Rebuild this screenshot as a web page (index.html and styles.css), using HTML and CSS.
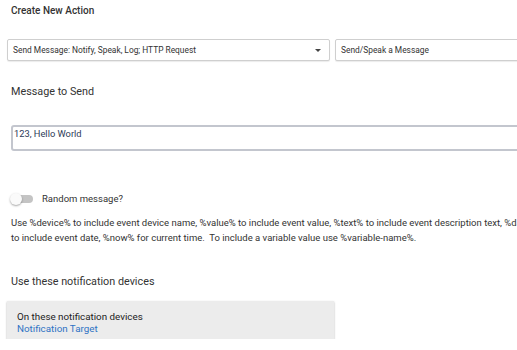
FILE: index.html
```html
<!DOCTYPE html>
<html lang="en">
<head>
  <meta charset="UTF-8">
  <meta name="viewport" content="width=device-width, initial-scale=1.0">
  <link rel="stylesheet" href="styles.css">
  <title>Create New Action</title>
</head>
<body>
  <div class="page">
    <h2 class="title">Create New Action</h2>

    <div class="selects">
      <div class="select select-main">
        <span>Send Message: Notify, Speak, Log; HTTP Request</span>
        <span class="caret"></span>
      </div>
      <div class="select select-sub">
        <span>Send/Speak a Message</span>
      </div>
    </div>

    <h3 class="label">Message to Send</h3>
    <div class="textarea">123, Hello World</div>

    <div class="toggle-row">
      <span class="toggle"><span class="knob"></span></span>
      <span class="toggle-label">Random message?</span>
    </div>

    <p class="help">Use %device% to include event device name, %value% to include event value, %text% to include event description text, %date% to include event date, %now% for current time.&nbsp; To include a variable value use %variable-name%.</p>

    <h3 class="label label-devices">Use these notification devices</h3>
    <div class="device-box">
      <div class="device-title">On these notification devices</div>
      <div class="device-link">Notification Target</div>
    </div>
  </div>
</body>
</html>
```

FILE: styles.css
```css
body {
  margin: 0;
  background: #fff;
  font-family: Roboto, "Liberation Sans", sans-serif;
  color: #333;
  overflow: hidden;
}

.page {
  width: 560px;
  padding: 4px 0 0 7px;
}

.title {
  margin: 0 0 0 4px;
  font-size: 10px;
  font-weight: 500;
  line-height: 14px;
  color: #333;
}

.selects {
  display: flex;
  gap: 5px;
  margin-top: 21px;
}

.select {
  flex-shrink: 0;
  display: flex;
  align-items: center;
  height: 20px;
  padding: 0 5px;
  border: 1px solid #cfcfcf;
  border-radius: 2px;
  box-shadow: 0 1px 1px rgba(0, 0, 0, 0.08);
  font-size: 8.4px;
  color: #333;
  background: #fff;
}

.select-main {
  width: 311px;
  justify-content: space-between;
}

.select-sub {
  width: 320px;
}

.caret {
  width: 0;
  height: 0;
  margin-right: 3px;
  border-left: 3px solid transparent;
  border-right: 3px solid transparent;
  border-top: 3px solid #444;
}

.label {
  margin: 24px 0 0 4px;
  font-size: 10.8px;
  font-weight: 400;
  line-height: 14px;
  color: #333;
}

.textarea {
  margin: 26px 0 0 4px;
  height: 21px;
  padding: 0 1px 1px;
  border: 2px solid #c3c6ce;
  border-radius: 3px;
  font-size: 9.3px;
  line-height: 14px;
  color: #2c3a57;
}

.toggle-row {
  display: flex;
  align-items: center;
  gap: 9px;
  margin: 42px 0 0 4px;
}

.toggle {
  position: relative;
  width: 22px;
  height: 8px;
  border-radius: 4px;
  background: #c4c4c4;
}

.knob {
  position: absolute;
  left: -1px;
  top: -2px;
  width: 12px;
  height: 12px;
  border-radius: 50%;
  background: #fafafa;
  box-shadow: 0 1px 2px rgba(0, 0, 0, 0.35);
}

.toggle-label {
  font-size: 9.5px;
  color: #333;
}

.help {
  margin: 11px 0 0 4px;
  width: 532px;
  font-size: 9.5px;
  line-height: 15px;
  color: #333;
}

.label-devices {
  margin-top: 30px;
}

.device-box {
  width: 317px;
  margin-top: 12px;
  padding: 10px 0 4px 10px;
  background: #ececec;
  box-shadow: 0 1px 2px rgba(0, 0, 0, 0.3);
  font-size: 9.8px;
  line-height: 12px;
}

.device-title {
  color: #222;
}

.device-link {
  color: #2f73c4;
}
```
